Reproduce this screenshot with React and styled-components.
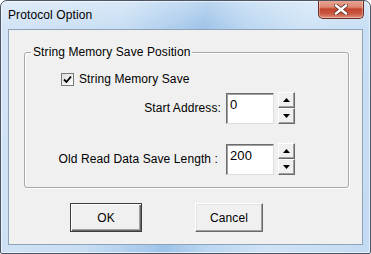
import React from 'react';
import styled, { createGlobalStyle } from 'styled-components';

const GlobalStyle = createGlobalStyle`
  html, body {
    margin: 0;
    padding: 0;
    background: #ffffff;
  }
  body {
    font-family: "Liberation Sans", Arial, sans-serif;
    font-size: 12px;
    letter-spacing: 0.1px;
    color: #000;
  }
`;

const Window = styled.div`
  width: 371px;
  height: 254px;
  box-sizing: border-box;
  border: 1px solid #4b5563;
  border-radius: 7px 7px 2px 2px;
  background:
    linear-gradient(180deg, rgba(255,255,255,0.3) 0px, rgba(255,255,255,0) 28px),
    linear-gradient(100deg, #d3e4f5 0%, #c8def4 30%, #aacbec 45%, #9ec3e8 50%, #bad6f1 60%, #cfe3f6 75%, #c3dbf3 100%);
  display: flex;
  flex-direction: column;
  overflow: hidden;
  box-shadow: inset 0 0 0 1px rgba(255,255,255,0.6);
`;

const TitleBar = styled.div`
  height: 27px;
  display: flex;
  align-items: flex-start;
  justify-content: space-between;
  padding-left: 7px;
  padding-right: 6px;
`;

const Title = styled.span`
  margin-top: 7px;
  font-family: "Liberation Sans", Arial, sans-serif;
  font-size: 12px;
  color: #000;
`;

const CloseButton = styled.div`
  width: 46px;
  height: 19px;
  margin-top: -1px;
  box-sizing: border-box;
  border: 1px solid #6e2a20;
  border-top: none;
  border-radius: 0 0 5px 5px;
  background: linear-gradient(180deg, #e9a996 0%, #dc8670 40%, #c4452f 50%, #c9563f 75%, #e0907a 100%);
  box-shadow: inset 0 0 0 1px rgba(255,255,255,0.35);
  display: flex;
  align-items: center;
  justify-content: center;
`;

const Client = styled.div`
  margin: 1px 7px 8px 7px;
  flex: 1;
  background: #f0f0f0;
  border: 1px solid #8fa3b8;
  padding: 15px 14px 0 15px;
  display: flex;
  flex-direction: column;
`;

const Group = styled.fieldset`
  margin: 0;
  width: 325px;
  height: 143px;
  box-sizing: border-box;
  border: 1px solid #a8a8a8;
  border-radius: 3px;
  box-shadow: 1px 1px 0 #ffffff, inset 1px 1px 0 #ffffff;
  padding: 0;
  display: flex;
  flex-direction: column;
`;

const Legend = styled.legend`
  margin-left: 6px;
  padding: 0 2px;
  font-size: 12px;
  line-height: 14px;
`;

const CheckRow = styled.label`
  display: flex;
  align-items: center;
  gap: 5px;
  margin-top: 13px;
  padding-left: 36px;
  height: 14px;
`;

const CheckBox = styled.span`
  width: 13px;
  height: 13px;
  box-sizing: border-box;
  border: 1px solid #7a7a7a;
  background: linear-gradient(135deg, #dcdcdc 0%, #ffffff 100%);
  display: flex;
  align-items: center;
  justify-content: center;
`;

const FieldRow = styled.div`
  display: flex;
  align-items: center;
  margin-top: ${props => props.$top}px;
`;

const FieldLabel = styled.span`
  width: 201px;
  text-align: right;
  padding-right: ${props => props.$gap || 5}px;
  box-sizing: border-box;
  flex: none;
`;

const Edit = styled.div`
  width: 48px;
  height: 31px;
  box-sizing: border-box;
  background: #fff;
  border: 1px solid;
  border-color: #6d6d6d #dcdcdc #dcdcdc #6d6d6d;
  box-shadow: inset 1px 1px 0 #a0a0a0;
  padding: 3px 0 0 3px;
  font-size: 13px;
  line-height: 15px;
`;

const Spinner = styled.div`
  margin-left: 4px;
  width: 17px;
  height: 32px;
  display: flex;
  flex-direction: column;
`;

const SpinButton = styled.div`
  flex: 1;
  box-sizing: border-box;
  background: #f0f0f0;
  border: 1px solid;
  border-color: #ffffff #696969 #696969 #ffffff;
  box-shadow: inset -1px -1px 0 #a0a0a0;
  display: flex;
  align-items: center;
  justify-content: center;
`;

const ButtonBar = styled.div`
  display: flex;
  gap: 53px;
  padding-left: 46px;
  margin-top: 15px;
`;

const PushButton = styled.div`
  width: ${props => props.$width}px;
  height: 29px;
  box-sizing: border-box;
  background: #f0f0f0;
  border: 1px solid;
  border-color: ${props => props.$default ? '#3c3c3c' : '#ffffff #696969 #696969 #ffffff'};
  box-shadow: ${props => props.$default
    ? 'inset 1px 1px 0 #ffffff, inset -1px -1px 0 #696969, inset -2px -2px 0 #a0a0a0'
    : 'inset -1px -1px 0 #a0a0a0, inset 1px 1px 0 #e3e3e3'};
  display: flex;
  align-items: center;
  justify-content: center;
  font-size: 12px;
`;

const Arrow = ({ up }) => (
  <svg width="7" height="4" viewBox="0 0 7 4">
    <polygon points={up ? '3.5,0 7,4 0,4' : '0,0 7,0 3.5,4'} fill="#000" />
  </svg>
);

const SpinEdit = ({ value }) => (
  <>
    <Edit>{value}</Edit>
    <Spinner>
      <SpinButton><Arrow up /></SpinButton>
      <SpinButton><Arrow /></SpinButton>
    </Spinner>
  </>
);

export default function App() {
  return (
    <>
      <GlobalStyle />
      <Window>
        <TitleBar>
          <Title>Protocol Option</Title>
          <CloseButton>
            <svg width="14" height="11" viewBox="0 0 14 11">
              <path d="M2 1.5 L12 9.5 M12 1.5 L2 9.5" stroke="#5a2a22" strokeWidth="4" strokeLinecap="square" />
              <path d="M2 1.5 L12 9.5 M12 1.5 L2 9.5" stroke="#ffffff" strokeWidth="2.4" strokeLinecap="square" />
            </svg>
          </CloseButton>
        </TitleBar>
        <Client>
          <Group>
            <Legend>String Memory Save Position</Legend>
            <CheckRow>
              <CheckBox>
                <svg width="9" height="9" viewBox="0 0 9 9">
                  <path d="M1 4.5 L3.5 7 L8 1.5" stroke="#000" strokeWidth="1.8" fill="none" />
                </svg>
              </CheckBox>
              String Memory Save
            </CheckRow>
            <FieldRow $top={6}>
              <FieldLabel>Start Address:</FieldLabel>
              <SpinEdit value="0" />
            </FieldRow>
            <FieldRow $top={19}>
              <FieldLabel $gap={8}>Old Read Data Save Length :</FieldLabel>
              <SpinEdit value="200" />
            </FieldRow>
          </Group>
          <ButtonBar>
            <PushButton $width={72} $default>OK</PushButton>
            <PushButton $width={68}>Cancel</PushButton>
          </ButtonBar>
        </Client>
      </Window>
    </>
  );
}
